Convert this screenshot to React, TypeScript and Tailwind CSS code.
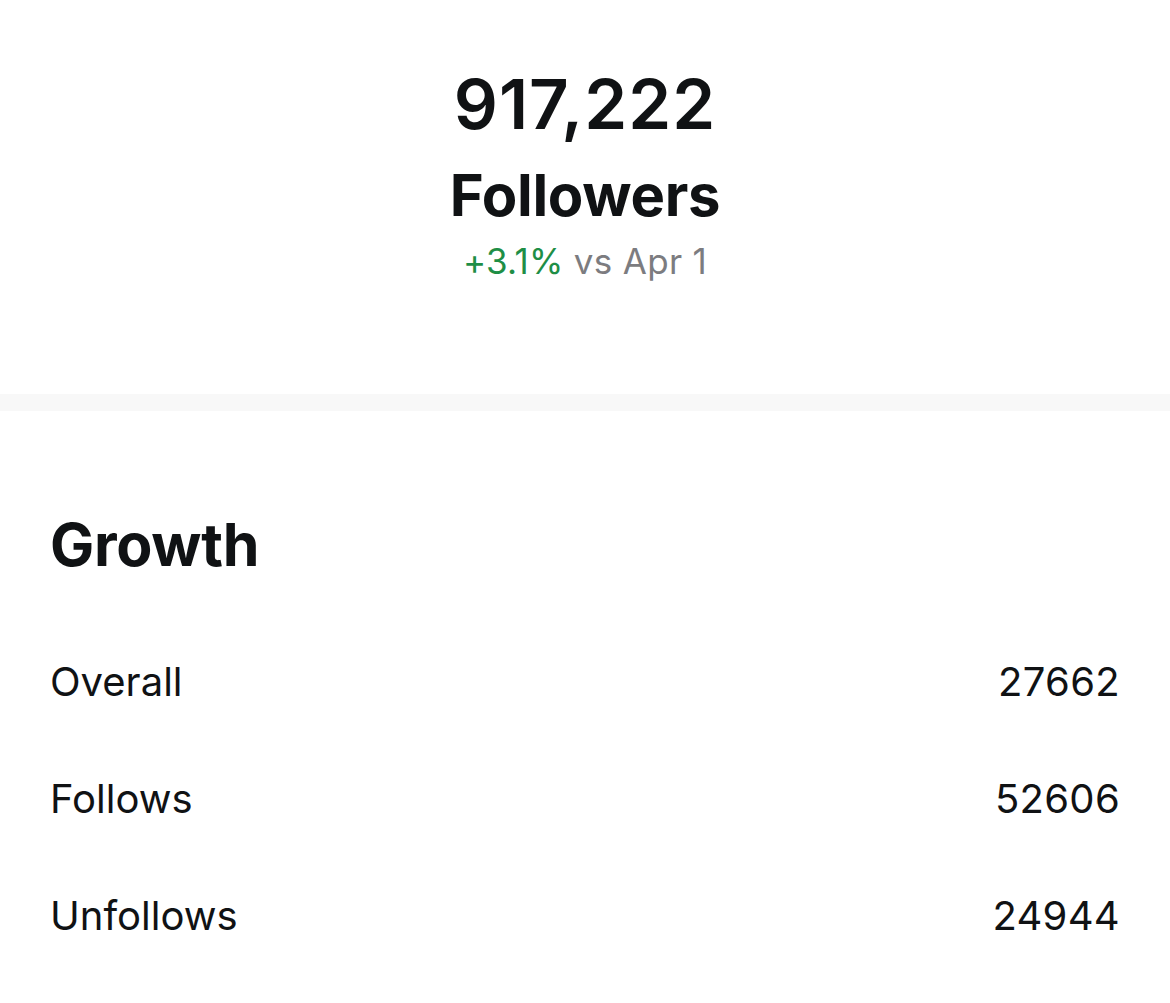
import React from "react";

const rows = [
  { label: "Overall", value: "27662" },
  { label: "Follows", value: "52606" },
  { label: "Unfollows", value: "24944" },
];

export default function App() {
  return (
    <div className="min-h-screen w-full bg-white text-[#101214] font-['Inter','Noto_Sans',sans-serif]">
      {/* header stat */}
      <div className="flex flex-col items-center pt-[68px] pb-[113px]">
        <div className="text-[69px] leading-[72px] font-semibold tracking-[1px]">917,222</div>
        <div className="mt-[25px] text-[58px] leading-[60px] font-bold tracking-[-0.3px]">Followers</div>
        <div className="mt-[16px] text-[35px] leading-[40px] tracking-[0.3px]">
          <span className="text-[#1e8e46]">+3.1%</span>
          <span className="text-[#7c7c80]"> vs Apr 1</span>
        </div>
      </div>

      <div className="h-[17px] bg-[#f8f8f8]" />

      {/* growth */}
      <div className="px-[50px] pt-[102px]">
        <h2 className="text-[59px] leading-[64px] font-bold tracking-[-0.3px]">Growth</h2>
        <div className="mt-[81px] flex flex-col gap-[69px]">
          {rows.map((r) => (
            <div key={r.label} className="flex items-center justify-between text-[40px] leading-[48px]">
              <span>{r.label}</span>
              <span className="tracking-[0.3px]">{r.value}</span>
            </div>
          ))}
        </div>
      </div>
    </div>
  );
}
